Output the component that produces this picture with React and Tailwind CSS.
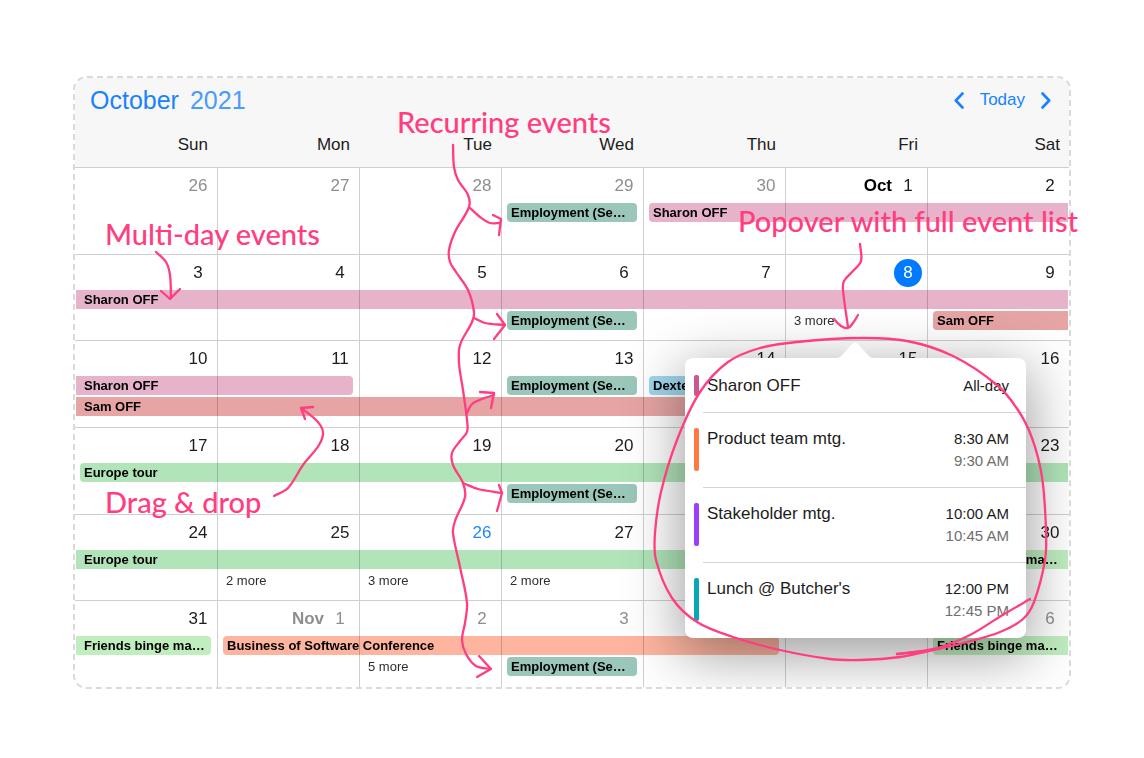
import React from "react";

const WEEKDAYS = ["Sun", "Mon", "Tue", "Wed", "Thu", "Fri", "Sat"];

const COLORS = {
  teal: "bg-[#9ac7ba]",
  pink: "bg-[#e7b3cb]",
  red: "bg-[#e6a5a4]",
  green: "bg-[#b1e5b9]",
  lime: "bg-[#c0eebf]",
  coral: "bg-[#feb5a0]",
  blue: "bg-[#9fd6ee]",
};

const COL_START = ["col-start-1", "col-start-2", "col-start-3", "col-start-4", "col-start-5", "col-start-6", "col-start-7"];
const COL_SPAN = ["", "col-span-1", "col-span-2", "col-span-3", "col-span-4", "col-span-5", "col-span-6", "col-span-7"];
const ROW_START = ["", "row-start-2", "row-start-3"];

const employment = (row) => ({ row, col: 3, span: 1, color: "teal", label: "Employment (Se…" });

const WEEKS = [
  {
    days: [26, 27, 28, 29, 30, 1, 2],
    muted: [0, 1, 2, 3, 4],
    months: { 5: "Oct" },
    events: [employment(1), { row: 1, col: 4, span: 3, color: "pink", label: "Sharon OFF", after: true }],
  },
  {
    days: [3, 4, 5, 6, 7, 8, 9],
    selected: 5,
    events: [
      { row: 1, col: 0, span: 7, color: "pink", label: "Sharon OFF", before: true, after: true },
      employment(2),
      { row: 2, col: 6, span: 1, color: "red", label: "Sam OFF", after: true },
    ],
    more: [{ col: 5, count: 3 }],
  },
  {
    days: [10, 11, 12, 13, 14, 15, 16],
    events: [
      { row: 1, col: 0, span: 2, color: "pink", label: "Sharon OFF", before: true },
      employment(1),
      { row: 1, col: 4, span: 1, color: "blue", label: "Dexter OFF" },
      { row: 2, col: 0, span: 6, color: "red", label: "Sam OFF", before: true },
    ],
  },
  {
    days: [17, 18, 19, 20, 21, 22, 23],
    events: [{ row: 1, col: 0, span: 7, color: "green", label: "Europe tour", after: true }, employment(2)],
  },
  {
    days: [24, 25, 26, 27, 28, 29, 30],
    today: 2,
    events: [
      { row: 1, col: 0, span: 6, color: "green", label: "Europe tour", before: true },
      { row: 1, col: 6, span: 1, color: "lime", label: "Friends binge ma…", after: true },
    ],
    more: [
      { col: 1, count: 2 },
      { col: 2, count: 3 },
      { col: 3, count: 2 },
    ],
  },
  {
    days: [31, 1, 2, 3, 4, 5, 6],
    muted: [1, 2, 3, 4, 5, 6],
    months: { 1: "Nov" },
    events: [
      { row: 1, col: 0, span: 1, color: "lime", label: "Friends binge ma…", before: true },
      { row: 1, col: 1, span: 4, color: "coral", label: "Business of Software Conference" },
      { row: 1, col: 6, span: 1, color: "lime", label: "Friends binge ma…", after: true },
      employment(2),
    ],
    more: [{ col: 2, count: 5 }],
  },
];

const AGENDA = [
  { title: "Sharon OFF", start: "All-day", bar: "bg-[#c8588f]" },
  { title: "Product team mtg.", start: "8:30 AM", end: "9:30 AM", bar: "bg-[#ff7a3f]" },
  { title: "Stakeholder mtg.", start: "10:00 AM", end: "10:45 AM", bar: "bg-[#9b3ffb]" },
  { title: "Lunch @ Butcher's", start: "12:00 PM", end: "12:45 PM", bar: "bg-[#06a8b4]" },
];

function EventBar({ event }) {
  const left = event.before ? "ml-px pl-2" : event.col === 0 ? "ml-[5px] pl-1 rounded-l-[4px]" : "ml-[6px] pl-1 rounded-l-[4px]";
  const right = event.after ? "mr-px" : "mr-[6px] rounded-r-[4px]";
  return (
    <button
      type="button"
      className={`${ROW_START[event.row]} ${COL_START[event.col]} ${COL_SPAN[event.span]} ${COLORS[event.color]} ${left} ${right} min-w-0 overflow-hidden whitespace-nowrap text-left text-[13px] leading-[19px] font-bold text-black mix-blend-multiply`}
    >
      {event.label}
    </button>
  );
}

function Week({ week }) {
  return (
    <div className="grid grid-cols-7 grid-rows-[33px_19px_19px_1fr] gap-y-[2px] border-t border-[#cfcfcf]">
      {week.days.map((day, i) => {
        const muted = week.muted?.includes(i);
        const tone = i === week.selected ? "rounded-full bg-[#007aff] text-white" : i === week.today ? "text-[#2387fb]" : "";
        return (
          <div
            key={i}
            className={`${COL_START[i]} row-start-1 row-end-5 flex items-start justify-end gap-[2px] pr-[5px] pt-1 text-[17px] leading-7 ${i > 0 ? "border-l border-[#cfcfcf]" : ""} ${muted ? "text-[#8e8e8e]" : "text-[#1c1c1c]"}`}
          >
            {week.months?.[i] && <span className={`font-bold ${muted ? "" : "text-black"}`}>{week.months[i]}</span>}
            <span className={`w-7 text-center ${tone}`}>{day}</span>
          </div>
        );
      })}
      {week.events.map((event, i) => (
        <EventBar key={i} event={event} />
      ))}
      {week.more?.map((m) => (
        <button
          key={m.col}
          type="button"
          className={`row-start-3 ${COL_START[m.col]} pl-[9px] text-left text-[13px] leading-5 text-[#2e2e2e]`}
        >
          {m.count} more
        </button>
      ))}
    </div>
  );
}

function Chevron({ d }) {
  return (
    <svg viewBox="0 0 10 18" className="h-[18px] w-[10px]" fill="none" stroke="currentColor" strokeWidth="2.6" strokeLinecap="round" strokeLinejoin="round" aria-hidden="true">
      <path d={d} />
    </svg>
  );
}

function Popover() {
  return (
    <div className="absolute top-[280px] right-[43px] w-[341px] rounded-lg bg-white pt-px pb-px shadow-[0_14px_56px_4px_rgba(0,0,0,0.38)]">
      <svg viewBox="0 0 36 17" className="absolute -top-4 left-[152px] h-[17px] w-9" fill="#fff" aria-hidden="true">
        <path d="M0 17V16C3 15.500 4 14 6 12L15 2Q18-1 21 2L30 12C32 14 33 15.500 36 16V17Z" />
      </svg>
      <ul>
        {AGENDA.map((item, i) => (
          <li key={item.title} className="flex pl-[9px]">
            <span className={`my-4 w-[5px] rounded-[2px] ${item.bar}`} />
            <div className={`ml-1 flex flex-1 justify-between border-t py-[15px] pr-[17px] pl-1 leading-[22px] ${i ? "border-[#d4d4d4]" : "border-transparent"}`}>
              <span className="text-[17px] text-[#1c1c1c]">{item.title}</span>
              <span className="flex flex-col text-right text-[15px]">
                <span className="text-[#1c1c1c]">{item.start}</span>
                {item.end && <span className="text-[#6e6e6e]">{item.end}</span>}
              </span>
            </div>
          </li>
        ))}
      </ul>
    </div>
  );
}

// Smooth curve through every point (Catmull-Rom converted to cubic Béziers,
// with handles scaled to the length of each segment).
function smooth(p) {
  const dist = (a, b) => Math.hypot(b[0] - a[0], b[1] - a[1]);
  const tangent = (i) => {
    const a = p[i - 1] || p[i];
    const c = p[i + 1] || p[i];
    const length = dist(a, c) || 1;
    return [(c[0] - a[0]) / length, (c[1] - a[1]) / length];
  };
  let d = `M${p[0][0]} ${p[0][1]}`;
  for (let i = 0; i < p.length - 1; i++) {
    const b = p[i];
    const c = p[i + 1];
    const h = dist(b, c) / 3;
    const t = tangent(i);
    const u = tangent(i + 1);
    d += `C${b[0] + t[0] * h} ${b[1] + t[1] * h} ${c[0] - u[0] * h} ${c[1] - u[1] * h} ${c[0]} ${c[1]}`;
  }
  return d;
}

const CURVES = [
  [[453, 145], [454, 167], [458, 180], [468, 195], [469, 207], [455, 232], [449, 250], [450, 262], [456, 272], [468, 290], [474, 312], [472, 322], [460, 345], [459, 363], [463, 390], [467, 420], [467, 432], [460, 441], [452, 453], [453, 465], [463, 483], [465, 497], [455, 521], [453, 533], [460, 567], [467, 603], [465, 623], [462, 640], [466, 654], [476, 666], [490, 669]],
  [[469, 207], [480, 217], [490, 223], [500, 223]],
  [[474, 318], [485, 323], [505, 325]],
  [[467, 413], [472, 404], [482, 399], [494, 395]],
  [[463, 483], [478, 489], [502, 493]],
  [[156, 252], [166, 262], [170, 275], [171, 298]],
  [[274, 496], [288, 488], [303, 465], [319, 445], [323, 432], [317, 421], [301, 408]],
  [[860, 244], [861, 261], [853, 271], [844, 281], [843, 290], [848, 327]],
  [[834, 319], [841, 326], [848, 328], [853, 323], [858, 315]],
  [[1030, 599], [1001, 616], [970, 635], [937, 648], [897, 654]],
  [[897, 654], [933, 650], [967, 642], [1000, 632], [1023, 619], [1034, 602], [1045, 560], [1046, 530], [1042, 477], [1032, 438], [1018, 410], [997, 385], [953, 356], [907, 341], [860, 338], [797, 342], [760, 348], [728, 362], [700, 392], [677, 440], [661, 492], [655, 533], [656, 560], [672, 598], [697, 622], [733, 637], [780, 650], [830, 659], [860, 660], [900, 657], [933, 650]],
];

const HEADS = [
  "M493 215L501 219L499 235",
  "M497 314L505 325L494 339",
  "M480 392L494 393L491 408",
  "M499 485L502 493L497 511",
  "M479 656L491 669L477 677",
  "M161 291L170 299L180 289",
  "M305 419L301 408L313 407",
];

const NOTES = [
  { text: "Recurring events", place: "left-[397px] top-[104px]" },
  { text: "Multi-day events", place: "left-[105px] top-[216px]" },
  { text: "Popover with full event list", place: "left-[738px] top-[203px]" },
  { text: "Drag & drop", place: "left-[105px] top-[484px]" },
];

export default function App() {
  return (
    <main className="relative min-h-screen bg-white px-[73px] pt-[76px] pb-[69px] font-['Liberation_Sans',Arial,sans-serif]">
      <section aria-label="Calendar" className="relative overflow-hidden rounded-[14px] border-2 border-dashed border-[#dadada] bg-white">
        <header className="bg-[#f7f7f7]">
          <div className="flex h-11 items-center justify-between pr-[18px] pl-[15px] text-[#1a82ff]">
            <h1 className="flex gap-[11px] text-[25px] leading-8">
              <span>October</span> <span className="text-[#4a9bfb]">2021</span>
            </h1>
            <div className="flex items-center gap-4">
              <button type="button" aria-label="Previous month">
                <Chevron d="M8.500 2.500L1.800 9.500L8.500 16.500" />
              </button>
              <button type="button" className="text-[17px] leading-6">Today</button>
              <button type="button" aria-label="Next month">
                <Chevron d="M1.500 2.500L8.200 9.500L1.500 16.500" />
              </button>
            </div>
          </div>
          <div className="grid h-[45px] grid-cols-7 items-center text-right text-[17px] leading-6 text-[#1c1c1c]">
            {WEEKDAYS.map((d) => (
              <span key={d} className="pr-[9px]">{d}</span>
            ))}
          </div>
        </header>
        <div className="isolate grid h-[520px] grid-rows-6 bg-white">
          {WEEKS.map((week, i) => (
            <Week key={i} week={week} />
          ))}
        </div>
        <Popover />
      </section>

      <div className="pointer-events-none absolute top-0 left-0 h-[758px] w-[1144px] text-[#ff3d7f]">
        <svg viewBox="0 0 1144 758" className="h-full w-full" fill="none" stroke="currentColor" strokeWidth="2.3" strokeLinecap="round" strokeLinejoin="round" aria-hidden="true">
          {CURVES.map((points, i) => (
            <path key={i} d={smooth(points)} />
          ))}
          {HEADS.map((d) => (
            <path key={d} d={d} />
          ))}
        </svg>
        {NOTES.map((n) => (
          <span key={n.text} className={`absolute whitespace-nowrap font-['Lato',cursive] text-[29px] leading-9 font-medium ${n.place}`}>
            {n.text}
          </span>
        ))}
      </div>
    </main>
  );
}
